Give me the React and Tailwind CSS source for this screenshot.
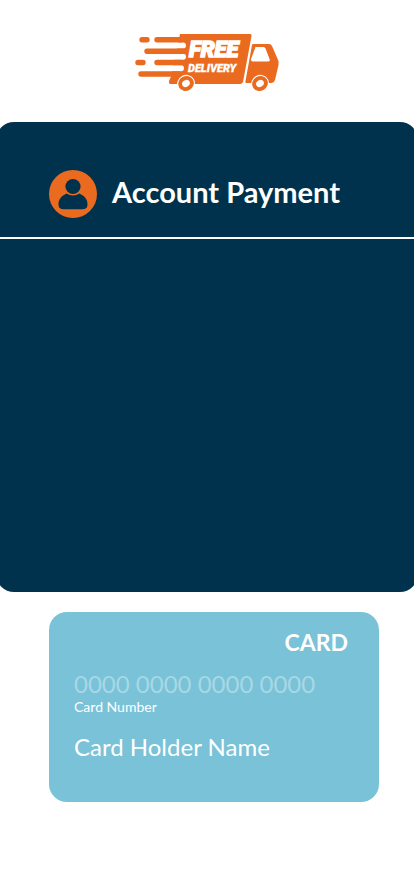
function DeliveryLogo() {
  return (
    <svg
      width="144"
      height="58"
      viewBox="0 0 144 58"
      role="img"
      aria-label="Free delivery"
      fill="#ea6b1f"
    >
      <path d="M45 0H115.500Q117 .300 116.500 2L108 48Q107 50 105 50H35Q33.500 49.500 34 47L36 42.500Z" />
      <path
        d="M20 11.500H48M20 22.700H48M20 34.200H46"
        stroke="#fff"
        strokeWidth="6"
        strokeLinecap="round"
      />
      <path
        d="M7 5.700H12M22 5.700H46M12 17.300H48M3 28.500H8M22 28.500H46M6 40H44"
        stroke="#ea6b1f"
        strokeWidth="5.400"
        strokeLinecap="round"
      />
      <path
        fillRule="evenodd"
        d="M118 10H134Q136 10 137 12L143.500 27V31L140 46Q139 49 136 49H111.500Q110 49.500 110.500 47L117 11Q117.300 10 118 10ZM120.500 13 116 25Q115.500 27.500 118 27.500H133Q135.500 27.500 134.500 25L130.500 14.500Q130 13 128.500 13Z"
      />
      <g stroke="#ea6b1f" strokeWidth="4">
        <g fill="#fff" transform="rotate(-28 51 49.500)">
          <ellipse cx="51" cy="49.500" rx="9" ry="8.500" stroke="none" />
          <ellipse cx="51" cy="49.500" rx="6" ry="5.300" />
        </g>
        <g fill="#fff" transform="rotate(-28 125 49.500)">
          <ellipse cx="125" cy="49.500" rx="9" ry="8.500" stroke="none" />
          <ellipse cx="125" cy="49.500" rx="6" ry="5.300" />
        </g>
      </g>
      <g
        fill="#fff"
        stroke="#fff"
        fontWeight="900"
        fontStyle="italic"
        fontFamily="Roboto, 'Liberation Sans', sans-serif"
      >
        <text x="54" y="23" fontSize="22" strokeWidth="1.4">FREE</text>
        <text x="53" y="38" fontSize="11" strokeWidth=".3">DELIVERY</text>
      </g>
    </svg>
  );
}

function AccountIcon() {
  return (
    <svg width="48" height="48" viewBox="0 0 48 48" aria-hidden="true">
      <circle cx="24" cy="24" r="24" fill="#ea6b1f" />
      <path
        d="M17.500 23.500C11.500 26.500 9.500 30 9.500 34.500Q9.500 39.200 14.500 39.200H33.500Q38.500 39.200 38.500 34.500C38.500 30 36.500 26.500 30.500 23.500Q24 27.500 17.500 23.500Z"
        fill="#00324d"
      />
      <circle cx="24" cy="16.500" r="7.600" fill="#00324d" />
    </svg>
  );
}

export default function App() {
  return (
    <main className="min-h-screen overflow-hidden bg-white pb-12 font-['Lato',sans-serif]">
      <header className="flex justify-center pt-[34px] pb-[30px]">
        <DeliveryLogo />
      </header>

      <section className="-mx-1 min-h-[470px] rounded-[18px] bg-[#00324d]">
        <div className="flex items-start gap-[15px] border-b-2 border-white pt-12 pb-[19px] pl-[53px]">
          <AccountIcon />
          <h1 className="pt-0.5 text-[29px] leading-10 font-bold text-white">Account Payment</h1>
        </div>
      </section>

      <section className="mt-5 mr-[35px] ml-[49px] min-h-[190px] rounded-[18px] bg-[#79c2d8] px-[25px] pt-3.5 pb-8 text-white">
        <p className="pr-1.5 text-right text-[23px] leading-8 font-bold">CARD</p>
        <div className="mt-[10px] flex flex-col">
          <input
            id="card-number"
            type="text"
            inputMode="numeric"
            placeholder="0000 0000 0000 0000"
            className="order-first h-8 w-full bg-transparent text-[24px] leading-8 outline-none placeholder:text-[#a8d8e6] placeholder:opacity-100"
          />
          <label htmlFor="card-number" className="text-[14px] leading-3.5">
            Card Number
          </label>
        </div>
        <p className="mt-[17px] text-[24px] leading-8">Card Holder Name</p>
      </section>
    </main>
  );
}
